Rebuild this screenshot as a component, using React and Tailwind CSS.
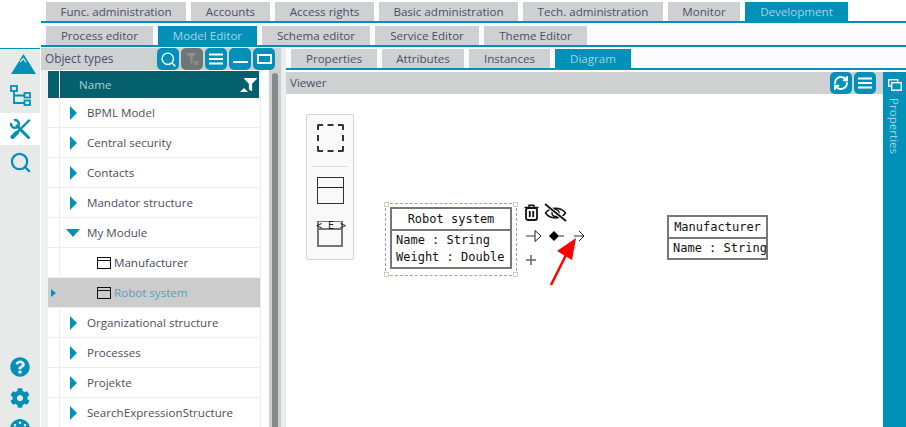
import React from "react";
import { Search, RefreshCw } from "lucide-react";
import { FaQuestionCircle, FaCog, FaPalette, FaFilter } from "react-icons/fa";

const T = "#0090b8";

function Tab({ children, active, w }) {
  return (
    <div style={{ width: w }} className={`h-[19px] flex items-center justify-center text-[11.6px] leading-none shrink-0 ${active ? "bg-[#0090b8] text-[#a3d5e3]" : "bg-[#cfd0d2] text-[#4a5068]"}`}>
      {children}
    </div>
  );
}

function Btn({ children, gray }) {
  return (
    <div className={`w-[22px] h-[22px] rounded-[5px] flex items-center justify-center shrink-0 ${gray ? "bg-[#6f7677]" : "bg-[#0090b8]"}`}>
      {children}
    </div>
  );
}

const Menu = () => (
  <svg width="16" height="12" viewBox="0 0 16 12"><path d="M1 1.500h14M1 6h14M1 10.500h14" stroke="#fff" strokeWidth="2" /></svg>
);

function Row({ label, open, child, selected }) {
  return (
    <div className={`relative h-[30px] flex border-b border-[#eeeeee] shrink-0 ${selected ? "bg-[#cccccc]" : ""}`}>
      <div className={`w-[12px] shrink-0 flex items-center ${selected ? "" : "border-r border-[#eeeeee]"}`}>
        {selected && <span className="ml-[3px] w-0 h-0 border-y-[4px] border-y-transparent border-l-[5px] border-l-[#0090b8]" />}
      </div>
      <div className="flex items-center flex-1 min-w-0 pt-[1px]">
        {child ? (
          <div className="flex items-center ml-[37px] gap-[3px]">
            <svg width="14" height="12" viewBox="0 0 14 12"><rect x=".5" y=".5" width="13" height="11" fill="none" stroke="#111" /><path d="M0 3.500h14" stroke="#111" /></svg>
            <span className={selected ? "text-[#4da3bc]" : "text-[#444b5c]"}>{label}</span>
          </div>
        ) : (
          <>
            {open ? (
              <span className="ml-[6px] mr-[7px] w-0 h-0 border-x-[7px] border-x-transparent border-t-[8px] border-t-[#0090b8]" />
            ) : (
              <span className="ml-[10px] mr-[10px] w-0 h-0 border-y-[7px] border-y-transparent border-l-[7px] border-l-[#0090b8]" />
            )}
            <span className="text-[#4c5060]">{label}</span>
          </>
        )}
      </div>
    </div>
  );
}

function UmlBox({ title, lines, w }) {
  return (
    <div style={{ width: w, fontFamily: "'DejaVu Sans Mono', monospace" }} className="border-2 border-[#777] bg-white text-[12px] text-[#111] leading-[17px]">
      <div className="h-[22px] flex items-center justify-center border-b-2 border-[#777]">{title}</div>
      <div className="pl-[4px] pt-[1px] pb-[1px] whitespace-pre">
        {lines.map((l) => <div key={l}>{l}</div>)}
      </div>
    </div>
  );
}

const Handle = ({ cls }) => <div className={`absolute w-[5px] h-[5px] bg-white border border-[#ccc] ${cls}`} />;

export default function App() {
  return (
    <div className="w-[906px] h-[427px] overflow-hidden flex bg-white text-[11.6px]" style={{ fontFamily: "'Open Sans', sans-serif" }}>
      {/* icon rail */}
      <div className="w-[41px] shrink-0 flex flex-col pt-[48px]">
        <div className="flex-1 w-[40px] flex flex-col border-t-[1.500px] border-[#0090b8] bg-[#e8eaea]">
          <div className="h-[63.500px] flex flex-col items-center">
            <svg className="mt-[5px] ml-[6px]" width="25" height="20" viewBox="0 0 25 20"><path d="M12.500 0 25 20H0Z" fill={T} /><path d="M9 8l3.500-3.500 2.500 4" fill="none" stroke="#e8eaea" strokeWidth="1.200" /></svg>
            <svg className="mt-[11px]" width="21" height="21" viewBox="0 0 21 21" fill="none" stroke={T} strokeWidth="1.800"><rect x="1" y="1" width="6" height="5" /><rect x="14.500" y="8" width="5.500" height="4.500" /><rect x="14.500" y="15.500" width="5.500" height="4.500" /><path d="M4 6v12h10.500M4 10.500h10.500" /></svg>
          </div>
          <div className="h-[32px] bg-white flex items-center justify-center">
            <svg width="20" height="20" viewBox="0 0 20 20" fill="none" stroke={T}>
              <path d="M1.200 4A3.900 3.900 0 1 0 4 1.200" strokeWidth="2.400" />
              <path d="M7 7 18.500 18.500" strokeWidth="3" strokeLinecap="round" />
              <path d="M19 1.500 6 14.500" strokeWidth="2.400" strokeLinecap="round" />
              <path d="M7 13.500 2.500 18" strokeWidth="4" strokeLinecap="round" />
            </svg>
          </div>
          <div className="h-[36px] flex items-center justify-center">
            <Search size={23} color={T} strokeWidth={2.400} />
          </div>
          <div className="flex-1" />
          <div className="flex flex-col items-center gap-[11px] -mb-[12px]">
            <FaQuestionCircle size={20} color={T} />
            <FaCog size={20} color={T} />
            <FaPalette size={20} color={T} />
          </div>
        </div>
      </div>

      {/* main */}
      <div className="flex-1 min-w-0 flex flex-col">
        <div className="h-[23px] pt-[2px] pl-[5px] flex gap-[5px] border-b-2 border-[#0090b8] bg-white shrink-0">
          <Tab w={140}>Func. administration</Tab>
          <Tab w={79}>Accounts</Tab>
          <Tab w={99}>Access rights</Tab>
          <Tab w={139}>Basic administration</Tab>
          <Tab w={140}>Tech. administration</Tab>
          <Tab w={72}>Monitor</Tab>
          <Tab active w={103}>Development</Tab>
        </div>
        <div className="h-[24px] pt-[3px] pl-[5px] flex gap-[5px] border-b-2 border-[#0090b8] bg-[#fbfbfe] shrink-0">
          <Tab w={107}>Process editor</Tab>
          <Tab active w={99}>Model Editor</Tab>
          <Tab w={108}>Schema editor</Tab>
          <Tab w={104}>Service Editor</Tab>
          <Tab w={103}>Theme Editor</Tab>
        </div>

        <div className="flex-1 min-h-0 flex pt-[1px]">
          {/* tree block */}
          <div className="w-[240px] shrink-0 flex flex-col">
            <div className="h-[22px] flex items-center bg-[#cfd0d2] pl-[4px] pr-[6px] gap-[2px] shrink-0">
              <span className="flex-1 text-[#4a5068] text-[11.8px]">Object types</span>
              <Btn><Search size={17} color="#fff" strokeWidth={2} /></Btn>
              <Btn gray>
                <svg width="16" height="16" viewBox="0 0 16 16"><path d="M2 2h10L8.500 7v5l-2 1V7z" fill="#8b9091" /><path d="M10 10l4 4M14 10l-4 4" stroke="#8b9091" strokeWidth="1.500" /></svg>
              </Btn>
              <Btn><Menu /></Btn>
              <Btn><div className="w-[15px] h-[2px] bg-white mt-[5px]" /></Btn>
              <Btn><div className="w-[15px] h-[10px] border-2 border-white" /></Btn>
            </div>
            <div className="flex-1 min-h-0 flex">
              <div className="w-[7px] shrink-0 bg-[#eff0f0]" />
              <div className="w-[213px] shrink-0 overflow-hidden border-r border-[#eeeeee] pt-[1px]">
                <div className="h-[27px] flex bg-[#05606e] text-[#a9d0d4] mr-[1px]">
                  <div className="w-[12px] border-r border-white" />
                  <div className="flex-1 flex items-center pl-[19px]">Name</div>
                  <div className="relative w-[20px]">
                    <FaFilter size={13} color="#fff" className="absolute right-[2px] top-[7px]" />
                    <span className="absolute left-[1px] top-[17px] w-0 h-0 border-x-[4px] border-x-transparent border-b-[4px] border-b-white" />
                  </div>
                </div>
                <Row label="BPML Model" />
                <Row label="Central security" />
                <Row label="Contacts" />
                <Row label="Mandator structure" />
                <Row label="My Module" open />
                <Row label="Manufacturer" child />
                <Row label="Robot system" child selected />
                <Row label="Organizational structure" />
                <Row label="Processes" />
                <Row label="Projekte" />
                <Row label="SearchExpressionStructure" />
              </div>
              <div className="w-[8px] shrink-0" />
              <div className="w-[12px] shrink-0 flex bg-[#cfcfcf] pt-[3px]">
                <div className="w-[6px] ml-[3px] bg-[#858a8a] rounded-t-[3px]" />
              </div>
            </div>
          </div>
          <div className="w-[5px] shrink-0 bg-[#e8eef0]" />

          {/* right */}
          <div className="flex-1 min-w-0 flex flex-col">
            <div className="h-[23px] pt-[2px] pl-[5px] flex gap-[5px] border-b-2 border-[#0090b8] bg-[#fbfbfe] shrink-0 -mt-[1px] mb-[1px]">
              <Tab w={86}>Properties</Tab>
              <Tab w={82}>Attributes</Tab>
              <Tab w={81}>Instances</Tab>
              <Tab active w={76}>Diagram</Tab>
            </div>
            <div className="flex-1 min-h-0 flex pt-[1px]">
              <div className="flex-1 min-w-0 flex flex-col">
                <div className="h-[22px] shrink-0 flex items-center bg-[#cfd0d2] pl-[4px] gap-[2px] pr-[7px]">
                  <span className="flex-1 text-[#4a5068]">Viewer</span>
                  <Btn><RefreshCw size={16} color="#fff" strokeWidth={3} /></Btn>
                  <Btn><Menu /></Btn>
                </div>
                {/* canvas */}
                <div className="relative flex-1 bg-white">
                  <div className="absolute left-[20px] top-[20px] w-[48px] h-[146px] bg-[#f9f9f9] border border-[#d4d4d4] rounded-[2px]">
                    <div className="mx-auto mt-[9px] w-[27px] h-[28px] border-2 border-dashed border-[#333] rounded-[2px]" />
                    <div className="mx-[5px] mt-[14px] h-px bg-[#ddd]" />
                    <div className="mx-auto mt-[10px] w-[27px] h-[27px] border border-[#333] bg-[#f9f9f9] flex flex-col"><div className="h-[10px] border-b border-[#222]" /></div>
                    <div className="relative mx-auto mt-[17px] w-[26px] h-[26px] border-2 border-[#777]" style={{ borderTopWidth: 1 }}>
                      <div className="h-[8px] border-b-2 border-[#777]" />
                      <span className="absolute -left-[3px] -right-[3px] -top-[1px] text-center text-[10px] leading-[10px] text-[#222] whitespace-pre" style={{ fontFamily: "'DejaVu Sans Mono', monospace" }}>{"< E >"}</span>
                    </div>
                  </div>

                  <div className="absolute left-[99px] top-[109px] w-[132px] h-[73px] border border-dashed border-[#9a9af5]">
                    <Handle cls="-left-[2px] -top-[2px]" />
                    <Handle cls="-right-[2px] -top-[2px]" />
                    <Handle cls="-left-[2px] -bottom-[2px]" />
                    <Handle cls="-right-[2px] -bottom-[2px]" />
                  </div>
                  <div className="absolute left-[104px] top-[113px]"><UmlBox title="Robot system" lines={["Name : String", "Weight : Double"]} w={122} /></div>

                  <svg className="absolute left-[238px] top-[110px]" width="15" height="17" viewBox="0 0 15 17" fill="none" stroke="#111">
                    <rect x="2" y="4" width="11" height="12" rx="2" strokeWidth="1.800" />
                    <path d="M.5 3.500h14" strokeWidth="1.500" />
                    <path d="M5 3V1.200h5V3" strokeWidth="1.400" />
                    <path d="M5.800 7v6M9.200 7v6" strokeWidth="1.800" />
                  </svg>
                  <svg className="absolute left-[258px] top-[109px]" width="23" height="19" viewBox="0 0 23 19" fill="none" stroke="#111">
                    <path d="M1.500 10C6 3.500 17 3.500 21.500 10 17 16.500 6 16.500 1.500 10Z" strokeWidth="1.500" />
                    <circle cx="11.500" cy="10" r="3.500" strokeWidth="1.500" />
                    <path d="M1 1 22 18" stroke="#fff" strokeWidth="3.500" />
                    <path d="M1 1 22 18" strokeWidth="1.800" />
                  </svg>
                  <svg className="absolute left-[239px] top-[134px]" width="64" height="16" viewBox="0 0 64 16" fill="none">
                    <path d="M1 8h13" stroke="#777" strokeWidth="1.500" />
                    <path d="M10 2.500 16 8l-6 5.500z" stroke="#222" fill="#fff" />
                    <path d="M24 8l5-5 5 5-5 5z" fill="#000" />
                    <path d="M33 8h6" stroke="#777" strokeWidth="1.500" />
                    <path d="M49 8h9" stroke="#777" strokeWidth="1.500" />
                    <path d="M54 3l5 5-5 5" stroke="#222" />
                  </svg>
                  <svg className="absolute left-[239px] top-[160px]" width="12" height="12" viewBox="0 0 12 12"><path d="M6 1v10M1 6h10" stroke="#666" strokeWidth="1.500" /></svg>

                  <div className="absolute left-[381px] top-[121px]"><UmlBox title="Manufacturer" lines={["Name : String"]} w={101} /></div>

                  <svg className="absolute left-[262px] top-[141px]" width="34" height="52" viewBox="0 0 34 52"><path d="M3 50 19 18" stroke="#f00" strokeWidth="2.500" /><path d="M28 3 9 16l15 9z" fill="#f00" /></svg>
                </div>
              </div>
              <div className="w-[23px] shrink-0 bg-[#0090b8] flex flex-col items-center pt-[7px]">
                <svg width="14" height="12" viewBox="0 0 14 12" fill="none" stroke="#fff" strokeWidth="1.400"><rect x=".7" y=".7" width="9" height="6.500" /><rect x="3.700" y="3.700" width="9.600" height="7.500" fill="#0090b8" /></svg>
                <span className="mt-[7px] text-[#a3d5e3] leading-none" style={{ writingMode: "vertical-rl" }}>Properties</span>
              </div>
            </div>
          </div>
        </div>
      </div>
    </div>
  );
}
